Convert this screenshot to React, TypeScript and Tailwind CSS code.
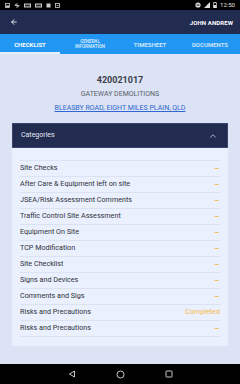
import { ArrowLeft, ChevronUp } from 'lucide-react';

const rows = [
  { label: 'Site Checks', status: '--' },
  { label: 'After Care & Equipment left on site', status: '--' },
  { label: 'JSEA/Risk Assessment Comments', status: '--' },
  { label: 'Traffic Control Site Assessment', status: '--' },
  { label: 'Equipment On Site', status: '--' },
  { label: 'TCP Modification', status: '--' },
  { label: 'Site Checklist', status: '--' },
  { label: 'Signs and Devices', status: '--' },
  { label: 'Comments and Sigs', status: '--' },
  { label: 'Risks and Precautions', status: 'Completed' },
  { label: 'Risks and Precautions', status: '--' },
];

function StatusBar() {
  return (
    <div className="h-[10px] bg-black flex items-center justify-between px-[5px] shrink-0">
      <div className="flex items-center gap-[4px]">
        <svg width="5" height="5" viewBox="0 0 5 5"><rect x="0.5" y="0.5" width="4" height="4" fill="none" stroke="#ccc" strokeWidth="0.8" /><rect x="1" y="2.5" width="3" height="1.5" fill="#ccc" /></svg>
        <svg width="6" height="5" viewBox="0 0 6 5"><path d="M3 0v5M0.5 2.5h5M1 1l4 3" stroke="#ccc" strokeWidth="0.8" /></svg>
        <svg width="7" height="5" viewBox="0 0 7 5"><rect x="0" y="0.5" width="7" height="4" fill="#ccc" /><rect x="1" y="1.5" width="5" height="2" fill="#333" /></svg>
        <svg width="7" height="5" viewBox="0 0 7 5"><rect x="0" y="0.5" width="7" height="4" fill="#ccc" /><rect x="1" y="1.5" width="5" height="2" fill="#333" /></svg>
        <svg width="5" height="5" viewBox="0 0 5 5"><rect x="0.5" y="0.5" width="4" height="4" fill="#ccc" /></svg>
        <svg width="5" height="5" viewBox="0 0 5 5"><rect x="0.5" y="0.5" width="4" height="4" fill="none" stroke="#ccc" strokeWidth="0.8" /><path d="M1.5 2.5h2" stroke="#ccc" strokeWidth="0.8" /></svg>
      </div>
      <div className="flex items-center gap-[3px]">
        <svg width="6" height="6" viewBox="0 0 6 6"><circle cx="3" cy="3" r="2.6" fill="#ddd" /><path d="M1.5 3h3" stroke="#000" strokeWidth="0.9" /></svg>
        <svg width="6" height="6" viewBox="0 0 6 6"><path d="M6 0v6H0z" fill="#ddd" /><path d="M1 2v3" stroke="#000" strokeWidth="0.6" /></svg>
        <svg width="4" height="6" viewBox="0 0 4 6"><rect x="1.2" y="0" width="1.6" height="1" fill="#ddd" /><rect x="0.3" y="0.8" width="3.4" height="5.2" fill="none" stroke="#ddd" strokeWidth="0.7" /><rect x="0.6" y="3" width="2.8" height="3" fill="#ddd" /></svg>
        <span className="text-[6px] leading-[10px] text-[#e0e0e0]">12:50</span>
      </div>
    </div>
  );
}

function NavBar() {
  return (
    <div className="h-[20px] bg-black flex items-center justify-center gap-[40px] shrink-0">
      <svg width="8" height="8" viewBox="0 0 8 8"><path d="M6.5 1L1.5 4l5 3z" fill="none" stroke="#ddd" strokeWidth="0.9" strokeLinejoin="round" /></svg>
      <svg width="9" height="9" viewBox="0 0 9 9"><circle cx="4.5" cy="4.5" r="3.5" fill="none" stroke="#ddd" strokeWidth="0.9" /></svg>
      <svg width="8" height="8" viewBox="0 0 8 8"><rect x="1" y="1" width="6" height="6" rx="0.6" fill="none" stroke="#ddd" strokeWidth="0.9" /></svg>
    </div>
  );
}

export default function App() {
  return (
    <div
      className="w-[240px] h-[384px] flex flex-col bg-[#dce3f4] overflow-hidden"
      style={{ fontFamily: 'Roboto, "Noto Sans", sans-serif' }}
    >
      <StatusBar />

      <div className="h-[24px] bg-[#222b50] flex items-center justify-between pl-[10px] pr-[7px] shrink-0">
        <ArrowLeft size={8} color="#ffffff" strokeWidth={2.5} />
        <span className="text-[6px] font-bold text-white tracking-[0.1px]">JOHN ANDREW</span>
      </div>

      <div className="h-[20px] bg-[#2196f3] grid grid-cols-4 shrink-0">
        <div className="flex items-center justify-center border-b-[2px] border-[#e3f2fd] pt-[2px]">
          <span className="text-[6px] font-bold text-white">CHECKLIST</span>
        </div>
        <div className="flex flex-col items-center justify-center text-[4.5px] leading-[5px] font-bold text-[#cde5fb]">
          <span>GENERAL</span>
          <span>INFORMATION</span>
        </div>
        <div className="flex items-center justify-center">
          <span className="text-[6px] font-bold text-[#cde5fb]">TIMESHEET</span>
        </div>
        <div className="flex items-center justify-center">
          <span className="text-[6px] font-bold text-[#cde5fb]">DOCUMENTS</span>
        </div>
      </div>

      <div className="flex-1 flex flex-col items-center pt-[21px]">
        <div className="text-[9px] leading-[11px] font-bold text-[#3a3d4a]">420021017</div>
        <div className="mt-[4px] text-[7px] leading-[8px] text-[#5a5e6b]">GATEWAY DEMOLITIONS</div>
        <div className="mt-[6px] text-[7px] leading-[8px] text-[#2f66cf] underline">
          BLEASBY ROAD, EIGHT MILES PLAIN, QLD
        </div>

        <div className="mt-[11px] w-[216px] flex flex-col">
          <div className="h-[25px] bg-[#222b50] border border-[#3a4470] flex items-center justify-between pl-[8px] pr-[9px]">
            <span className="text-[7px] text-[#e6e9f3]">Categories</span>
            <ChevronUp size={10} color="#c7cbe0" strokeWidth={2} />
          </div>
          <div className="bg-[#eaf0fe] px-[8px] pt-[12px] pb-[9px]">
            <div className="border-b border-[#dbe2f2]">
              {rows.map((row, i) => (
                <div
                  key={i}
                  className="h-[16px] border-t border-[#dbe2f2] flex items-center justify-between"
                >
                  <span className="text-[7.2px] text-[#2e3038]">{row.label}</span>
                  {row.status === 'Completed' ? (
                    <span className="text-[7.2px] text-[#f7b84a]">Completed</span>
                  ) : (
                    <span className="text-[8px] font-bold text-[#f7b84a] pr-[1px]">–</span>
                  )}
                </div>
              ))}
            </div>
          </div>
        </div>
      </div>

      <NavBar />
    </div>
  );
}
